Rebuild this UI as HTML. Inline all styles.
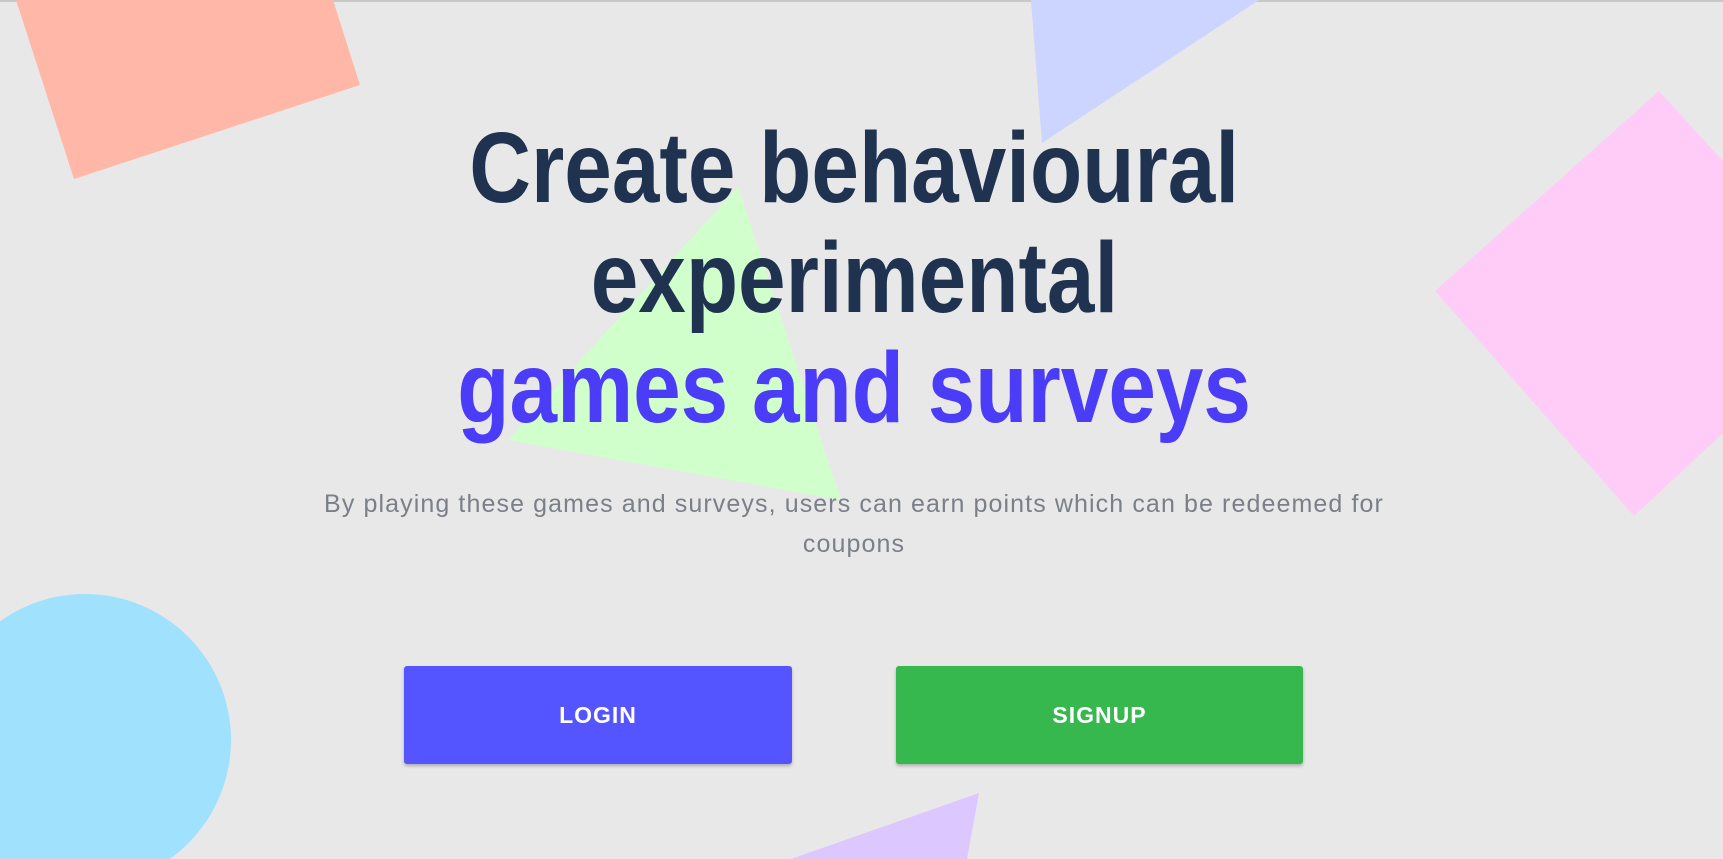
<!DOCTYPE html>
<html><head><meta charset="utf-8"><style>
html,body{margin:0;padding:0;width:1723px;height:859px;overflow:hidden;background:#e8e8e8;font-family:"Liberation Sans",sans-serif;}
.top{position:absolute;left:0;top:0;width:1723px;height:2px;background:#c8c8c8;}
svg.bg{position:absolute;left:0;top:0;}
.h{position:absolute;left:0;width:1708px;text-align:center;font-weight:bold;font-size:100px;line-height:100px;white-space:nowrap;}
.h span{display:inline-block;transform:scaleX(.855);}
.sub{position:absolute;left:154px;width:1400px;top:484px;text-align:center;color:#7a7f88;font-size:25px;letter-spacing:1.1px;line-height:40px;white-space:nowrap;}
.btn{position:absolute;top:666px;height:98px;border-radius:3px;color:#fff;font-weight:bold;font-size:23px;letter-spacing:1px;display:flex;align-items:center;justify-content:center;box-shadow:0 2px 3px rgba(0,0,0,.25);}
</style></head><body>
<div class="top"></div>
<svg class="bg" width="1723" height="859">
<polygon points="16,0 333,0 360,85 74,179" fill="#ffb8a8"/>
<polygon points="1031,0 1259,0 1042,143" fill="#cbd5ff"/>
<polygon points="1435,291 1659,91 1857,308 1634,516" fill="#ffccf7"/>
<polygon points="738,187 508,440 841,500" fill="#d0ffcc"/>
<circle cx="85" cy="740" r="146" fill="#a0e1fe"/>
<polygon points="979,793 791,859 967,859" fill="#dcc8ff"/>
</svg>
<div class="h" style="top:118px;color:#1f3350"><span>Create behavioural</span></div>
<div class="h" style="top:228px;color:#1f3350"><span>experimental</span></div>
<div class="h" style="top:338px;color:#4a3cf7"><span>games and surveys</span></div>
<div class="sub">By playing these games and surveys, users can earn points which can be redeemed for<br>coupons</div>
<div class="btn" style="left:404px;width:388px;background:#5555ff">LOGIN</div>
<div class="btn" style="left:896px;width:407px;background:#36b84f">SIGNUP</div>
</body></html>
